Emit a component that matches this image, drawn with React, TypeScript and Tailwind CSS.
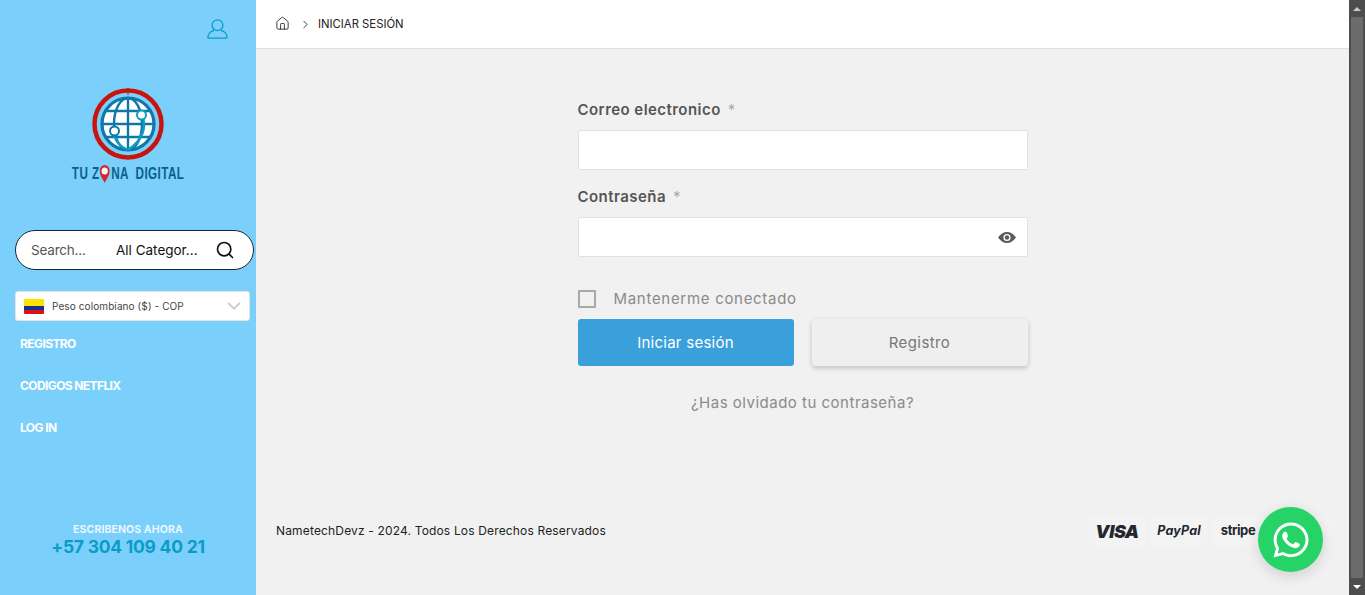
import { ChevronDown, ChevronRight, House, Search } from "lucide-react";
import { FaWhatsapp } from "react-icons/fa";

const font = "font-['Inter','Noto_Sans',sans-serif]";

function Logo() {
  return (
    <svg width="74" height="74" viewBox="0 0 74 74" fill="none">
      <circle cx="37" cy="37" r="33.500" stroke="#c9130c" strokeWidth="4.500" />
      <path d="M37 1v7" stroke="#c9130c" strokeWidth="1" />
      <circle cx="37" cy="37" r="26" fill="#fff" stroke="#0f78a8" strokeWidth="3.200" />
      <path d="M37 11v52M11 37h52M15 24h44M15 50h44" stroke="#0f78a8" strokeWidth="2.400" />
      <ellipse cx="37" cy="37" rx="14" ry="26" stroke="#0f78a8" strokeWidth="2.400" />
      <path d="M51 28c5 12 1 25-14 35M23 45c0 8 6 15 14 18" stroke="#0a9ec4" strokeWidth="2.400" />
      <circle cx="50.500" cy="28" r="4.500" fill="#fff" stroke="#0a9ec4" strokeWidth="2" />
      <circle cx="23.500" cy="44" r="4.500" fill="#fff" stroke="#0f78a8" strokeWidth="2" />
    </svg>
  );
}

function Sidebar() {
  return (
    <aside className="flex w-[256px] shrink-0 flex-col bg-[#7ad0fb]">
      <div className="flex justify-end pt-[19px] pr-[28px]">
        <svg width="21" height="20" viewBox="0 0 21 20" fill="none" stroke="#0a9cc8" strokeWidth="1.300">
          <circle cx="10.500" cy="6.200" r="5.400" />
          <path d="M.8 19c0-4 3-6.800 6-7.500M20.200 19c0-4-3-6.800-6-7.500M.8 19.200h19.400" />
        </svg>
      </div>
      <div className="mt-[48px] flex flex-col items-center">
        <Logo />
        <div className="mt-[3px] flex scale-x-[0.73] items-center font-['Liberation_Sans',sans-serif] text-[16px] leading-[20px] font-bold tracking-[0.6px] whitespace-nowrap text-[#0b5f8a]">
          <span>TU Z</span>
          <svg width="14" height="18" viewBox="0 0 14 18" className="mx-[0.5px]">
            <path d="M7 0a7 6 0 0 1 7 6C14 10 9.500 14 7 18 4.500 14 0 10 0 6a7 6 0 0 1 7-6z" fill="#d6262b" />
            <ellipse cx="7" cy="6" rx="4.300" ry="3.600" fill="#fff" />
          </svg>
          <span className="ml-[1px]">NA</span>
          <span className="ml-[9px]">DIGITAL</span>
        </div>
      </div>

      <div className={`${font} mt-[46px] ml-[15px] flex h-[40px] w-[239px] items-center rounded-[20px] border border-[#1a2430] bg-white pr-[18px] pl-[15px] text-[13.500px]`}>
        <span className="w-[85px] tracking-[-0.2px] text-[#555]">Search...</span>
        <span className="flex-1 text-[#111]">All Categor...</span>
        <Search className="h-[20px] w-[20px] text-[#111]" strokeWidth={2} />
      </div>

      <div className={`${font} mt-[21px] ml-[15px] flex h-[30px] w-[235px] items-center rounded-[3px] border border-[#e3e3e3] bg-white pr-[4px] pl-[8px] text-[10px] tracking-[0.1px] text-[#444]`}>
        <span className="flex h-[15px] w-[20px] flex-col overflow-hidden rounded-[1px]">
          <span className="h-[7px] bg-[#fde400]" />
          <span className="h-[4px] bg-[#1a2f8f]" />
          <span className="h-[4px] bg-[#d5121d]" />
        </span>
        <span className="ml-[8px] flex-1">Peso colombiano ($) - COP</span>
        <ChevronDown className="h-[22px] w-[22px] text-[#cfcfcf]" />
      </div>

      <nav className={`${font} mt-[14px] ml-[20px] flex flex-col gap-[24px] text-[12px] leading-[18px] font-bold tracking-[-0.6px] text-white`}>
        <a>REGISTRO</a>
        <a>CODIGOS NETFLIX</a>
        <a>LOG IN</a>
      </nav>

      <div className={`${font} mt-[86px] flex flex-col items-center`}>
        <span className="text-[10.500px] leading-[14px] font-bold tracking-[0.1px] text-[#e8f6ff]">ESCRIBENOS AHORA</span>
        <span className="text-[17.500px] leading-[20px] font-bold tracking-[-0.25px] text-[#0a9cc8]">+57 304 109 40 21</span>
      </div>
    </aside>
  );
}

function Field({ label, eye }: { label: string; eye?: boolean }) {
  return (
    <div>
      <div className="flex items-center text-[15px] leading-[22px] font-semibold tracking-[0.45px] text-[#555]">
        {label}
        <span className="ml-[7px] text-[15px] font-normal text-[#aaa]">*</span>
      </div>
      <div className="mt-[9px] flex h-[40px] items-center justify-end rounded-[1px] border border-[#e2e2e2] bg-white pr-[11px]">
        {eye && (
          <svg width="18" height="11" viewBox="0 0 18 11">
            <path d="M0 5.500C2.500 2 5.500 0 9 0s6.500 2 9 5.500C15.500 9 12.500 11 9 11S2.500 9 0 5.500z" fill="#5a5a5a" />
            <circle cx="9" cy="5.500" r="3.600" fill="#fff" />
            <circle cx="9" cy="5.500" r="2.200" fill="#5a5a5a" />
          </svg>
        )}
      </div>
    </div>
  );
}

function LoginForm() {
  return (
    <div className={`${font} mx-auto mt-[50px] w-[450px]`}>
      <Field label="Correo electronico" />
      <div className="mt-[16px]">
        <Field label="Contraseña" eye />
      </div>
      <label className="mt-[33px] flex h-[18px] items-center text-[15px] tracking-[0.7px] text-[#8a8a8a]">
        <span className="h-[18px] w-[18px] rounded-[1px] border-2 border-[#a9a9a9]" />
        <span className="ml-[18px]">Mantenerme conectado</span>
      </label>
      <div className="mt-[11px] flex justify-between">
        <button className="h-[47px] w-[216px] rounded-[3px] bg-[#3aa0dc] pt-[1px] text-[15px] tracking-[0.25px] text-white">Iniciar sesión</button>
        <button className="h-[47px] w-[216px] rounded-[3px] bg-[#efefef] pt-[1px] text-[15px] tracking-[0.4px] text-[#777] shadow-[0_2px_5px_rgba(0,0,0,0.2)]">Registro</button>
      </div>
      <p className="mt-[26px] text-center text-[15px] leading-[22px] tracking-[0.5px] text-[#8a8a8a]">¿Has olvidado tu contraseña?</p>
    </div>
  );
}

function Payments() {
  const chip = "flex h-[30px] w-[56px] items-center justify-center rounded-[4px] bg-[#f3f3f3] text-[#23272e]";
  return (
    <div className="flex gap-[6px]">
      <span className={`${chip} text-[18px] font-black italic tracking-[-0.5px]`}>VISA</span>
      <span className={`${chip} text-[12.500px] font-bold italic`}>PayPal</span>
      <span className={`${chip} pr-[6px] text-[13px] font-bold tracking-[-0.4px]`}>stripe</span>
      <span className={chip} />
    </div>
  );
}

function Scrollbar() {
  return (
    <div className="flex w-[16px] shrink-0 flex-col items-center bg-[#4d4d4d]">
      <div className="flex h-[17px] w-full items-center justify-center">
        <span className="h-0 w-0 border-x-[4px] border-b-[4px] border-x-transparent border-b-[#c9c9c9]" />
      </div>
      <div className="w-[12px] flex-1 bg-[#6b6b6b]" />
      <div className="flex h-[17px] w-full items-center justify-center">
        <span className="h-0 w-0 border-x-[4px] border-t-[4px] border-x-transparent border-t-white" />
      </div>
    </div>
  );
}

export default function App() {
  return (
    <div className="relative flex h-[595px] w-[1365px] overflow-hidden bg-[#f1f1f1]">
      <Sidebar />
      <main className="flex min-w-0 flex-1 flex-col">
        <header className={`${font} flex h-[49px] items-center border-b border-[#dedede] bg-white pl-[19px] text-[11.300px] text-[#222]`}>
          <House className="mb-[1px] h-[15px] w-[15px] text-[#222]" strokeWidth={1.4} />
          <ChevronRight className="ml-[9px] h-[13px] w-[13px] text-[#222]" strokeWidth={1.600} />
          <span className="mt-[1px] ml-[6px]">INICIAR SESIÓN</span>
        </header>
        <LoginForm />
        <footer className={`${font} mt-[102px] flex items-center justify-between pr-[18px] pl-[20px] text-[12px] tracking-[0.16px] text-[#222]`}>
          <span>NametechDevz - 2024. Todos Los Derechos Reservados</span>
          <Payments />
        </footer>
      </main>
      <Scrollbar />
      <a className="absolute top-[507px] left-[1258px] flex h-[65px] w-[65px] items-center justify-center rounded-full bg-[#25d366] shadow-[0_4px_14px_rgba(0,0,0,0.14)]">
        <FaWhatsapp className="h-[40px] w-[40px] text-white" />
      </a>
    </div>
  );
}
